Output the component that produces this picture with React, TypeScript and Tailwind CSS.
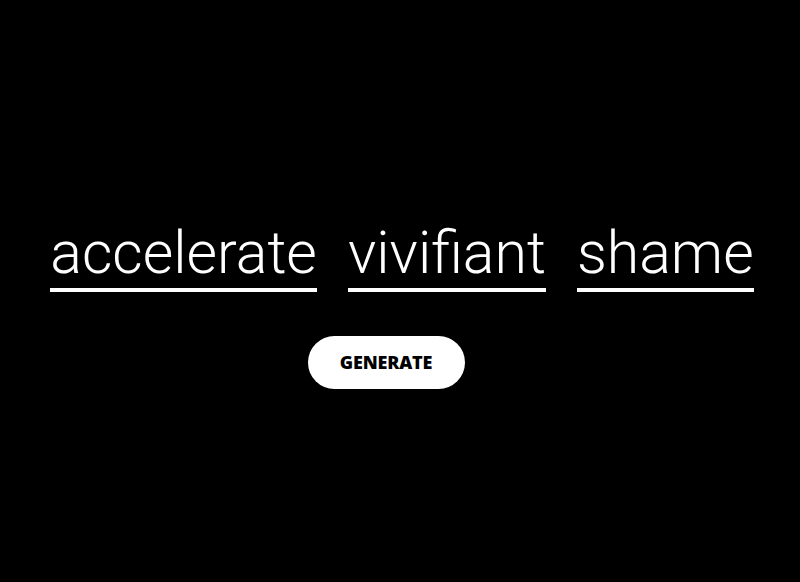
const words = ['accelerate', 'vivifiant', 'shame'];

export default function App() {
  return (
    <div className="h-[582px] w-full bg-black flex flex-col items-center pt-[223px] overflow-hidden">
      <div className="flex gap-[31px] ml-[4px]">
        {words.map((w) => (
          <span
            key={w}
            className="text-white font-light text-[59px] leading-[59px] pb-[6px] border-b-[4px] border-white"
            style={{ fontFamily: 'Roboto, sans-serif' }}
          >
            {w}
          </span>
        ))}
      </div>
      <button
        className="mt-[44px] mr-[28px] w-[157px] h-[53px] rounded-full bg-white text-black font-extrabold text-[18px] tracking-[-0.2px]"
        style={{ fontFamily: '"Open Sans", sans-serif' }}
      >
        GENERATE
      </button>
    </div>
  );
}
